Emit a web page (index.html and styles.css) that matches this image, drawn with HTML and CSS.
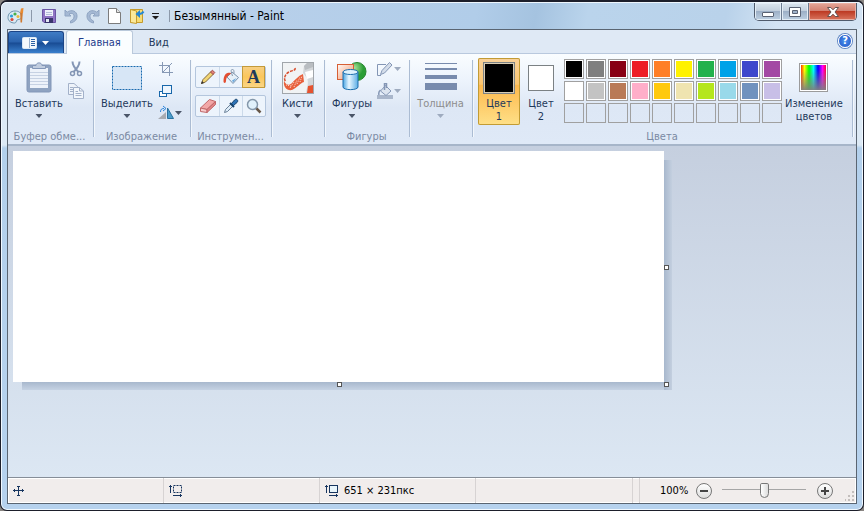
FILE: index.html
```html
<!DOCTYPE html>
<html lang="ru">
  <head>
    <meta charset="UTF-8" />
    <meta name="viewport" content="width=device-width, initial-scale=1.0" />
    <title>Безымянный - Paint</title>
    <!-- Stylesheet -->
    <link rel="stylesheet" href="styles.css">
  </head>
  <body>
    <div class="window">
      <header class="titlebar">
        <div class="quick-access">
          <svg class="app-icon" width="18" height="18" viewBox="0 0 18 18">
            <path d="M8 4C3.500 4 1 7 1 10.500C1 14 4 16 7.500 16C9.500 16 9 14 10 13C11.500 12 14.500 13 14.500 9.500C14.500 6 12 4 8 4Z" fill="#dbeaf4" stroke="#6b93ad"/>
            <circle cx="4.500" cy="9" r="1.600" fill="#2e9fd8"/>
            <circle cx="8" cy="7" r="1.600" fill="#48b04a"/>
            <circle cx="5" cy="12.500" r="1.600" fill="#d9493a"/>
            <circle cx="11" cy="9.500" r="1.500" fill="#e9b93b"/>
            <path d="M14 1.500L16.500 1L16 6H13Z" fill="#e88b32"/>
            <path d="M13.200 6H15.800L15 15.500H13.500Z" fill="#cf7a30"/>
          </svg>
          <span class="divider"></span>
          <button class="tool save" aria-label="Сохранить">
            <svg width="16" height="16" viewBox="0 0 16 16">
              <path d="M1.500 1.500H14.500V14.500H3L1.500 13Z" fill="#8f74c4" stroke="#6a54a4"/>
              <rect x="4" y="2" width="8" height="6" fill="#eef1fb"/>
              <path d="M5 4.500H11M5 6.500H11" stroke="#b4bbd8"/>
              <rect x="4" y="10" width="8" height="5" fill="#39356c"/>
              <rect x="5" y="11" width="3" height="3" fill="#e3e6f4"/>
            </svg>
          </button>
          <button class="tool" aria-label="Отменить">
            <svg width="16" height="16" viewBox="0 0 16 16">
              <path d="M2 2V8H8L6 6C9 4.500 11.500 6 11 9C10.700 11 9.500 12 7.500 13V15C11.500 14 14 12 14 8C14 3 8.500 1 4.200 4.200Z" fill="#a5b9d4" stroke="#8fa4c2"/>
            </svg>
          </button>
          <button class="tool" aria-label="Вернуть">
            <svg width="16" height="16" viewBox="0 0 16 16">
              <path d="M14 2V8H8L10 6C7 4.500 4.500 6 5 9C5.300 11 6.500 12 8.500 13V15C4.500 14 2 12 2 8C2 3 7.500 1 11.800 4.200Z" fill="#a5b9d4" stroke="#8fa4c2"/>
            </svg>
          </button>
          <button class="tool" aria-label="Создать">
            <svg width="16" height="16" viewBox="0 0 16 16">
              <path d="M1.500 0.500H9.500L13.500 4.500V15.500H1.500Z" fill="#fff" stroke="#7c7c7c"/>
              <path d="M9.500 0.500V4.500H13.500" fill="#e4e4e4" stroke="#7c7c7c"/>
            </svg>
          </button>
          <button class="tool" aria-label="Открыть">
            <svg width="16" height="16" viewBox="0 0 16 16">
              <path d="M1.500 1.500H13.500V14.500H1.500Z" fill="#f7dc72" stroke="#c49b2e"/>
              <path d="M1.500 1.500L7.500 3V15.500L1.500 14.500Z" fill="#fbe999" stroke="#c49b2e"/>
              <path d="M14.500 3.500C13.500 5.500 12 6 10 6" fill="none" stroke="#2487d3" stroke-width="2"/>
              <path d="M11 2L6.500 6L11 10Z" fill="#2487d3"/>
            </svg>
          </button>
          <button class="tool more" aria-label="Настройка панели быстрого доступа">
            <svg width="9" height="8" viewBox="0 0 9 8">
              <path d="M1 1H8V2H1ZM1 4H8L4.500 7.500Z" fill="#1c1c1c"/>
            </svg>
          </button>
          <span class="divider last"></span>
        </div>
        <h1 class="title">Безымянный - Paint</h1>
        <div class="window-buttons">
          <button class="minimize" aria-label="Свернуть">
            <svg width="14" height="12" viewBox="0 0 14 12"><rect x="1.500" y="6.500" width="11" height="4" rx="0.500" fill="#fff" stroke="#5a6273"/></svg>
          </button>
          <button class="maximize" aria-label="Развернуть">
            <svg width="14" height="12" viewBox="0 0 14 12"><path d="M1.500 1.500H12.500V10.500H1.500ZM4.500 4.500V7.500H9.500V4.500Z" fill="#fff" fill-rule="evenodd" stroke="#5a6273"/></svg>
          </button>
          <button class="close" aria-label="Закрыть">
            <svg width="14" height="12" viewBox="0 0 14 12"><path d="M1.500 1.500H4.800L7 3.800L9.200 1.500H12.500L9 6L12.500 10.500H9.200L7 8.200L4.800 10.500H1.500L5 6Z" fill="#fff" stroke="#66504f"/></svg>
          </button>
        </div>
      </header>

      <div class="client">
        <nav class="tabs">
          <button class="app-menu" aria-label="Меню Paint">
            <svg width="28" height="14" viewBox="0 0 28 14">
              <rect x="0.500" y="1.500" width="14" height="11" rx="1" fill="#f5f9fd" stroke="#dbe8f5"/>
              <path d="M7.500 2V12" stroke="#9bb2ce"/>
              <path d="M9 3.500H13M9 5.500H13M9 7.500H13M9 9.500H13" stroke="#2d62a5"/>
              <path d="M20 5H27L23.500 9Z" fill="#fff"/>
            </svg>
          </button>
          <button class="tab active">Главная</button>
          <button class="tab">Вид</button>
          <button class="help" aria-label="Справка">?</button>
        </nav>

        <main class="ribbon">
          <section class="group clipboard">
            <div class="group-body">
              <button class="big">
                <span class="icon">
                  <svg width="26" height="32" viewBox="0 0 26 32">
                    <rect x="1" y="3" width="24" height="27" rx="2" fill="#8fa3c1" stroke="#8397b8"/>
                    <rect x="4" y="6" width="18" height="20" fill="#edf2fa"/>
                    <path d="M4 10.500H22M4 13.500H22M4 16.500H22M4 19.500H22M4 22.500H22" stroke="#c6d1e3"/>
                    <path d="M6.500 6.500V3.500H10C10 0 16 0 16 3.500H19.500V6.500Z" fill="#c1cddf" stroke="#8397b8"/>
                  </svg>
                </span>
                <span>Вставить</span>
                <span class="arrow"></span>
              </button>
              <div class="small-tools">
                <button class="tool" aria-label="Вырезать">
                  <svg width="16" height="16" viewBox="0 0 16 16">
                    <path d="M4.500 0.500C4.500 4 6.500 7 10.500 11M11.500 0.500C11.500 4 9.500 7 5.500 11" fill="none" stroke="#8496b5" stroke-width="2"/>
                    <circle cx="4.500" cy="12.500" r="2" fill="none" stroke="#8496b5" stroke-width="1.500"/>
                    <circle cx="11.500" cy="12.500" r="2" fill="none" stroke="#8496b5" stroke-width="1.500"/>
                  </svg>
                </button>
                <button class="tool" aria-label="Копировать">
                  <svg width="16" height="16" viewBox="0 0 16 16">
                    <path d="M0.500 0.500H6L9.500 3.500V11.500H0.500Z" fill="#eef3fa" stroke="#a3b1c9"/>
                    <path d="M2 4.500H5M2 6.500H5M2 8.500H5" stroke="#a3b1c9"/>
                    <path d="M5.500 4.500H11.500L15.500 8V15.500H5.500Z" fill="#f3f7fc" stroke="#a3b1c9"/>
                    <path d="M11.500 4.500V8H15.500M7.500 8.500H10M7.500 10.500H13.500M7.500 12.500H13.500" fill="none" stroke="#a3b1c9"/>
                  </svg>
                </button>
              </div>
            </div>
            <h2>Буфер обме...</h2>
          </section>

          <section class="group image">
            <div class="group-body">
              <button class="big">
                <span class="icon">
                  <svg width="32" height="26" viewBox="0 0 32 26">
                    <rect x="1.500" y="1.500" width="29" height="23" fill="#d7e6f6" stroke="#1769ae" stroke-dasharray="2 1"/>
                  </svg>
                </span>
                <span>Выделить</span>
                <span class="arrow"></span>
              </button>
              <div class="small-tools">
                <button class="tool" aria-label="Обрезать">
                  <svg width="16" height="16" viewBox="0 0 16 16">
                    <path d="M4.500 1V11.500H15M1 4.500H11.500V15M4 12L14 2" fill="none" stroke="#8799b5"/>
                  </svg>
                </button>
                <button class="tool" aria-label="Изменить размер">
                  <svg width="16" height="16" viewBox="0 0 16 16">
                    <rect x="1.500" y="8.500" width="7" height="5" fill="#fff" stroke="#1867aa"/>
                    <rect x="4.500" y="2.500" width="9" height="8" fill="#edf5fd" stroke="#1867aa"/>
                  </svg>
                </button>
                <button class="tool wide" aria-label="Повернуть">
                  <svg width="16" height="16" viewBox="0 0 16 16">
                    <path d="M0 14L8 7V14Z" fill="#a8abb1"/>
                    <path d="M9.500 3L15.500 13.500H9.500Z" fill="#4b9ccb" stroke="#27709f"/>
                    <path d="M2.500 7C2.500 4 4 3.500 6 3.500M5 1L8 3.500L5 6" fill="none" stroke="#2a84dc"/>
                  </svg>
                  <span class="arrow"></span>
                </button>
              </div>
            </div>
            <h2>Изображение</h2>
          </section>

          <section class="group tools">
            <div class="group-body">
              <div class="tool-grid">
                <div class="tool-row">
                  <button aria-label="Карандаш">
                    <svg width="16" height="16" viewBox="0 0 16 16">
                      <path d="M1.500 14.500L3 10.500L11 2.500L13.500 5L5.500 13Z" fill="#f2d674" stroke="#84683a"/>
                      <path d="M10.500 3L12.500 1.200L14.800 3.500L13 5.500Z" fill="#e2837a" stroke="#a24f49"/>
                      <path d="M1 15L2 12L4 14Z" fill="#333"/>
                    </svg>
                  </button>
                  <button aria-label="Заливка цветом">
                    <svg width="16" height="16" viewBox="0 0 16 16">
                      <path d="M4 8L9 3L15.500 8.500L10 14.500Z" fill="#e6f0f8" stroke="#7b93ac"/>
                      <path d="M9.500 7C7.500 1 8 0.500 9.500 0.500C11 0.500 11 2 11 4.500" fill="none" stroke="#8799ad"/>
                      <path d="M8 4C4 3 0.500 5 0.500 12.500C0.500 14.500 3 14.500 3 12C3 9 4 7 7 5.500Z" fill="#e34d30"/>
                      <path d="M9 11.500L13.500 9L10.200 13.500Z" fill="#6ba9de"/>
                    </svg>
                  </button>
                  <button class="selected text-tool" aria-label="Текст">A</button>
                </div>
                <div class="tool-row">
                  <button aria-label="Ластик">
                    <svg width="16" height="16" viewBox="0 0 16 16">
                      <path d="M0.500 10L9.500 1.500L15.500 3.500L7 11.500Z" fill="#f2a7a7" stroke="#c0686a"/>
                      <path d="M0.500 10L7 11.500V14.500L0.500 13.500Z" fill="#f8cccc" stroke="#c0686a"/>
                      <path d="M7 11.500L15.500 3.500V6.500L7 14.500Z" fill="#e28486" stroke="#c0686a"/>
                    </svg>
                  </button>
                  <button aria-label="Палитра">
                    <svg width="16" height="16" viewBox="0 0 16 16">
                      <path d="M1.500 14.500L2.500 11.500L8 6L10 8L4.500 13.500Z" fill="#ddecf8" stroke="#6b8198"/>
                      <path d="M7 5L11 9" stroke="#17446f" stroke-width="2"/>
                      <path d="M8.500 5.500L11.500 2C13.500 0 16 2.500 14 4.500L10.500 7.500Z" fill="#2e73b7" stroke="#17446f"/>
                    </svg>
                  </button>
                  <button aria-label="Масштаб">
                    <svg width="16" height="16" viewBox="0 0 16 16">
                      <path d="M9.500 9.500L14.500 14.500" stroke="#675748" stroke-width="2.500"/>
                      <circle cx="6.500" cy="6.500" r="5" fill="#e1f1fb" stroke="#8497aa" stroke-width="1.500"/>
                    </svg>
                  </button>
                </div>
              </div>
            </div>
            <h2>Инструмен...</h2>
          </section>

          <section class="group brushes">
            <div class="group-body">
              <button class="big">
                <span class="icon">
                  <svg width="32" height="32" viewBox="0 0 32 32">
                    <rect x="0.500" y="0.500" width="31" height="31" fill="#f1f3f4" stroke="#a1a6ab"/>
                    <path d="M13 6C14 9 10 8 7 10C3 12 1 17 4 20" fill="none" stroke="#d94e2d" stroke-width="1.500" stroke-dasharray="3 1"/>
                    <path d="M2 19C4 23 7 24 10 21C13 18 16 14 21 12L22 20C18 21 15 26 10 28C5 29 1 25 2 19Z" fill="#e8603c"/>
                    <path d="M4 23L9 24M8 26L12 20M12 25L15 18M15 22L18 15M18 20L20 14" stroke="#fbe1d8" stroke-dasharray="1 1"/>
                    <path d="M22 4L25 1H31V31H24C25 25 27 21 25 16L21 11Z" fill="#d3d6d9"/>
                    <path d="M22 4L25 1H31V5L23 8Z" fill="#b9bdc1"/>
                    <path d="M23 10L31 8V15L25 17Z" fill="#fff"/>
                    <path d="M26 24L31 23V31H25Z" fill="#e6522f"/>
                  </svg>
                </span>
                <span>Кисти</span>
                <span class="arrow"></span>
              </button>
            </div>
          </section>

          <section class="group shapes">
            <div class="group-body">
              <button class="big">
                <span class="icon">
                  <svg width="32" height="32" viewBox="0 0 32 32">
                    <defs>
                      <linearGradient id="cylinder"><stop stop-color="#4aa5e2"/><stop offset="0.400" stop-color="#e9f7ff"/><stop offset="1" stop-color="#5bade5"/></linearGradient>
                      <linearGradient id="square" x2="1" y2="1"><stop stop-color="#fffaf7"/><stop offset="1" stop-color="#f19369"/></linearGradient>
                      <radialGradient id="ball" cx="0.350" cy="0.300"><stop stop-color="#a8e29a"/><stop offset="1" stop-color="#2a9e36"/></radialGradient>
                    </defs>
                    <circle cx="21" cy="9.500" r="9" fill="url(#ball)" stroke="#25852c"/>
                    <rect x="1.500" y="2.500" width="16" height="15" fill="url(#square)" stroke="#d75f35"/>
                    <path d="M7 10V25C7 28.500 22 28.500 22 25V10Z" fill="url(#cylinder)" stroke="#1e6fae"/>
                    <ellipse cx="14.500" cy="10" rx="7.500" ry="2.500" fill="#dff2fd" stroke="#1e6fae"/>
                  </svg>
                </span>
                <span>Фигуры</span>
                <span class="arrow"></span>
              </button>
              <div class="small-tools">
                <button class="tool wide" aria-label="Контур">
                  <svg width="16" height="16" viewBox="0 0 16 16">
                    <path d="M9 3.500H0.500V14.500H4" fill="none" stroke="#8496b5"/>
                    <path d="M3.500 13.500L5 9.500L12.500 1.500L15 4L7.500 12Z" fill="#d4ddea" stroke="#8496b5"/>
                  </svg>
                  <span class="arrow"></span>
                </button>
                <button class="tool wide" aria-label="Заливка">
                  <svg width="16" height="16" viewBox="0 0 16 16">
                    <rect x="0" y="12" width="16" height="4" fill="#a9b6cb"/>
                    <path d="M3.500 8L8.500 2.500L14 8L9 12.500Z" fill="#dce4ef" stroke="#8496b5"/>
                    <path d="M7.500 7V0.500H9.500V5M3.500 7C2 8 1.500 10 2 12" fill="none" stroke="#8496b5" stroke-width="1.500"/>
                  </svg>
                  <span class="arrow"></span>
                </button>
              </div>
            </div>
            <h2>Фигуры</h2>
          </section>

          <section class="group thickness">
            <div class="group-body">
              <button class="big" disabled>
                <span class="icon">
                  <svg width="32" height="32" viewBox="0 0 32 32">
                    <path d="M0 1H32V2H0ZM0 6H32V8H0ZM0 13H32V17H0ZM0 21H32V28H0Z" fill="#788bad"/>
                  </svg>
                </span>
                <span>Толщина</span>
                <span class="arrow"></span>
              </button>
            </div>
          </section>

          <section class="group colors">
            <div class="group-body">
              <button class="big color-one selected">
                <span class="icon"><span class="swatch"></span></span>
                <span>Цвет</span>
                <span>1</span>
              </button>
              <button class="big color-two">
                <span class="icon"><span class="swatch"></span></span>
                <span>Цвет</span>
                <span>2</span>
              </button>
              <div class="palette" id="palette"></div>
              <button class="big edit-colors">
                <span class="icon"><span class="rainbow"></span></span>
                <span>Изменение</span>
                <span>цветов</span>
              </button>
            </div>
            <h2>Цвета</h2>
          </section>
        </main>

        <div class="workspace">
          <div class="sheet">
            <canvas class="paper" width="651" height="231"></canvas>
            <span class="handle right"></span>
            <span class="handle bottom"></span>
            <span class="handle corner"></span>
          </div>
        </div>

        <footer class="statusbar">
          <div class="cell">
            <svg width="12" height="12" viewBox="0 0 12 12">
              <path d="M5.500 1V11M0 5.500H11M4 1.500H7M4 10.500H7M1.500 4V7M9.500 4V7" stroke="#17355f"/>
            </svg>
          </div>
          <div class="cell">
            <svg width="14" height="13" viewBox="0 0 14 13">
              <path d="M1.500 1V9M0 2.500H3M4 11.500H13M11.500 10V13" stroke="#17355f"/>
              <rect x="4.500" y="1.500" width="8" height="7" fill="none" stroke="#17355f" stroke-dasharray="2 1"/>
            </svg>
          </div>
          <div class="cell">
            <svg width="14" height="13" viewBox="0 0 14 13">
              <path d="M1.500 1V9M0 2.500H3M4 11.500H13M11.500 10V13" stroke="#17355f"/>
              <rect x="4.500" y="1.500" width="8" height="7" fill="#e8f5fb" stroke="#17355f"/>
            </svg>
            <span>651 × 231пкс</span>
          </div>
          <div class="cell"></div>
          <div class="cell gap"></div>
          <div class="zoom">
            <label for="zoom">100%</label>
            <button class="round" id="zoom-out" aria-label="Уменьшить">
              <svg width="10" height="10" viewBox="0 0 10 10"><path d="M1 5H9" stroke="#444" stroke-width="2"/></svg>
            </button>
            <input type="range" id="zoom" min="0" max="100" value="50" />
            <button class="round" id="zoom-in" aria-label="Увеличить">
              <svg width="10" height="10" viewBox="0 0 10 10"><path d="M1 5H9M5 1V9" stroke="#444" stroke-width="2"/></svg>
            </button>
          </div>
          <svg class="grip" width="10" height="10" viewBox="0 0 10 10">
            <path d="M7 0H9V2H7ZM7 4H9V6H7ZM7 8H9V10H7ZM3 4H5V6H3ZM3 8H5V10H3ZM0 8H1V10H0Z" fill="#c3bebc"/>
          </svg>
        </footer>
      </div>
    </div>
    <!-- Script -->
    <script>
      const palette = document.getElementById("palette");
      const zoom = document.getElementById("zoom");
      const zoomOut = document.getElementById("zoom-out");
      const zoomIn = document.getElementById("zoom-in");

      const colors = [
        "#000000", "#7f7f7f", "#880015", "#ed1c24", "#ff7f27",
        "#fff200", "#22b14c", "#00a2e8", "#3f48cc", "#a349a4",
        "#ffffff", "#c3c3c3", "#b97a57", "#ffaec9", "#ffc90e",
        "#efe4b0", "#b5e61d", "#99d9ea", "#7092be", "#c8bfe7",
      ];

      // two rows of colors, the third one stays empty
      for (let i = 0; i < 30; i++) {
        const cell = document.createElement("button");
        cell.className = "color";
        if (colors[i]) {
          cell.classList.add("filled");
          cell.style.backgroundColor = colors[i];
          cell.setAttribute("aria-label", colors[i]);
        } else {
          cell.setAttribute("aria-label", "Пусто");
        }
        palette.appendChild(cell);
      }

      zoomOut.addEventListener("click", () => zoom.stepDown(10));
      zoomIn.addEventListener("click", () => zoom.stepUp(10));
    </script>
  </body>
</html>
```

FILE: styles.css
```css
* {
  padding: 0;
  margin: 0;
  box-sizing: border-box;
}
body {
  background-color: #8a8683;
  font-family: "DejaVu Sans Condensed", "Noto Sans", sans-serif;
  font-size: 11px;
  line-height: 13px;
  color: #1e395b;
}
button {
  font: inherit;
  color: inherit;
  background: none;
  border: none;
  cursor: pointer;
}
svg {
  display: block;
}
.window {
  min-height: 100vh;
  display: flex;
  flex-direction: column;
  padding: 0 6px 6px;
  border: 1px solid #1d1f2b;
  border-top-width: 2px;
  border-radius: 7px;
  background: linear-gradient(#dce9f5 0, #dce9f5 143px, #b3d0ec 146px, #b6d2ee 100%);
  box-shadow: inset 0 0 0 1px #f0f8ff;
}

/* Title bar */
.titlebar {
  display: flex;
  align-items: center;
  height: 27px;
  margin: 0 -5px;
  padding-left: 5px;
  background: linear-gradient(100deg, #d9e5f1 0%, #d3e2f1 18%, #b8d0ea 28%, #b1cde9 55%, #a5c3e0 62%, #bad4ec 68%, #b9d2ea 84%, #d3e3f3 90%);
  border-top: 1px solid #eef6fd;
  border-radius: 5px 5px 0 0;
}
.quick-access {
  display: flex;
  align-items: center;
  gap: 6px;
}
.divider {
  width: 1px;
  height: 12px;
  margin-right: 3px;
  background-color: #8c99aa;
}
.divider.last {
  margin: 0 4px 0 3px;
}
.tool {
  display: flex;
  align-items: center;
}
.title {
  font-size: 12px;
  font-weight: 400;
  color: #000;
}
.window-buttons {
  display: flex;
  align-self: flex-start;
  height: 18px;
  margin: 0 5px 0 auto;
  border: 1px solid #505b6c;
  border-top: none;
  border-radius: 0 0 5px 5px;
  overflow: hidden;
}
.window-buttons button {
  display: flex;
  align-items: center;
  justify-content: center;
  width: 27px;
  border-right: 1px solid #6c7b90;
  background: linear-gradient(#dbe5ef, #c2cfdd 45%, #9db0c7 50%, #bed0e2);
  box-shadow: inset 0 0 0 1px #e3edf6;
}
.window-buttons .close {
  width: 47px;
  border-right: none;
  background: linear-gradient(#e5a698, #d38172 45%, #bd3b24 50%, #d9755e);
  box-shadow: inset 0 0 0 1px #e9b0a4;
}

/* Client area */
.client {
  flex: 1;
  display: flex;
  flex-direction: column;
  border: 1px solid #5a6572;
}
.tabs {
  display: flex;
  align-items: flex-end;
  height: 24px;
  background-color: #dfe9f5;
  border-bottom: 1px solid #b9c9de;
}
.app-menu {
  display: flex;
  align-items: center;
  justify-content: center;
  width: 56px;
  height: 22px;
  border: 1px solid #1c4587;
  border-bottom: none;
  border-radius: 3px 3px 0 0;
  background: linear-gradient(#3f7cc5, #2a62ad 48%, #184b93 52%, #3a80cd);
}
.tab {
  height: 21px;
  padding: 0 16px;
}
.tab.active {
  margin: 0 0 -1px 2px;
  height: 24px;
  padding: 0 11px;
  border: 1px solid #bac9db;
  border-bottom: none;
  border-radius: 3px 3px 0 0;
  background-color: #fafdff;
  color: #1e3c8c;
}
.help {
  width: 14px;
  height: 14px;
  margin: 0 4px 5px auto;
  border: 1px solid #fff;
  border-radius: 50%;
  background: radial-gradient(#4c93ee, #1d4fc4);
  box-shadow: 0 0 0 1px #6288c4;
  color: #fff;
  font-weight: 700;
  line-height: 12px;
}

/* Ribbon */
.ribbon {
  display: flex;
  height: 92px;
  padding-top: 4px;
  background: linear-gradient(#fafdff, #ecf3fc 30%, #dde7f5 60%, #dfe9f7);
  border-bottom: 2px solid #a6b5c9;
}
.group {
  flex: none;
  display: flex;
  flex-direction: column;
  justify-content: space-between;
  position: relative;
  padding-right: 4px;
}
/* etched line on the right of each group */
.group::after {
  content: "";
  position: absolute;
  top: 2px;
  right: 0;
  bottom: 7px;
  width: 2px;
  background: linear-gradient(90deg, #abbcd3 50%, #f2f7fc 50%);
}
.group h2 {
  font-size: 11px;
  font-weight: 400;
  line-height: 15px;
  text-align: center;
  color: #7b8aa3;
  white-space: nowrap;
}
.group-body {
  display: flex;
  justify-content: center;
}
.clipboard {
  width: 87px;
}
.image {
  width: 97px;
}
.tools {
  width: 81px;
}
.brushes {
  width: 53px;
}
.shapes {
  width: 85px;
}
.thickness {
  width: 63px;
}
.colors {
  width: 380px;
}
.colors .group-body {
  justify-content: flex-start;
  padding-left: 4px;
}
.big {
  display: flex;
  flex-direction: column;
  align-items: center;
  height: 67px;
  white-space: nowrap;
}
.big:disabled {
  color: #8d8d8d;
}
.big .icon {
  display: flex;
  align-items: center;
  justify-content: center;
  height: 39px;
}
.arrow {
  width: 7px;
  height: 4px;
  background-color: #4a5568;
  clip-path: polygon(0 0, 100% 0, 50% 100%);
}
.big .arrow {
  margin-top: 4px;
}
.big:disabled .arrow,
.shapes .small-tools .arrow {
  background-color: #9eabbf;
}
.small-tools {
  display: flex;
  flex-direction: column;
  gap: 6px;
  padding: 3px 0 0 5px;
}
.wide {
  gap: 1px;
}
.tool-grid {
  display: flex;
  flex-direction: column;
  gap: 7px;
  padding-top: 8px;
}
.tool-row {
  display: flex;
  height: 22px;
  border: 1px solid #b4c6dd;
  border-radius: 2px;
  background-color: #edf4fc;
}
.tool-row button {
  display: flex;
  align-items: center;
  justify-content: center;
  width: 23px;
}
.tool-row button + button {
  border-left: 1px solid #ccdaea;
}
.tool-row .selected {
  margin: -1px -1px -1px 0;
  border: 1px solid #c39a3a;
  background: linear-gradient(#f7cf82, #fbc65b 50%, #fbd584);
}
.text-tool {
  font-family: "Liberation Serif", serif;
  font-size: 18px;
  font-weight: 700;
}

/* Colors */
.color-one {
  width: 42px;
  border-radius: 2px;
  background: linear-gradient(#f8d19b, #fbc670 39%, #fdb94e 41%, #fee088);
  box-shadow: inset 0 0 0 1px #c29b34;
}
.color-two {
  width: 42px;
}
.swatch {
  width: 26px;
  height: 26px;
  border: 1px solid #7b8184;
  outline: 1px solid #fff;
  outline-offset: -2px;
  background-color: #fff;
}
.color-one .swatch {
  width: 32px;
  height: 32px;
  outline-color: #d9cdb4;
  background-color: #000;
}
.palette {
  display: grid;
  grid-template-columns: repeat(10, 20px);
  grid-auto-rows: 20px;
  gap: 2px;
  padding: 1px 0 0 2px;
}
.color {
  border: 1px solid #a0a0a0;
}
.color.filled {
  box-shadow: inset 0 0 0 1px #fff;
}
.edit-colors {
  margin-left: 3px;
}
.rainbow {
  width: 29px;
  height: 29px;
  border: 1px solid #9b9b9b;
  outline: 1px solid #fff;
  outline-offset: -2px;
  background: linear-gradient(transparent 20%, #808080), linear-gradient(90deg, #f00, #ff0, #0f0, #0ff, #00f, #f0f, #f00);
}

/* Drawing area */
.workspace {
  flex: 1;
  padding: 5px;
  background: linear-gradient(#c5cfdf, #dce7f3);
}
.sheet {
  position: relative;
  width: fit-content;
}
/* soft strips under and beside the paper */
.sheet::before,
.sheet::after {
  content: "";
  position: absolute;
}
.sheet::before {
  top: 9px;
  bottom: -8px;
  left: 100%;
  width: 8px;
  background: linear-gradient(90deg, #a8b8cd, #c3cfdf);
}
.sheet::after {
  top: 100%;
  left: 9px;
  right: 0;
  height: 8px;
  background: linear-gradient(#a8b8cd, #c5d2e3);
}
.paper {
  display: block;
  background-color: #fff;
}
.handle {
  position: absolute;
  z-index: 1;
  width: 5px;
  height: 5px;
  border: 1px solid #555;
  background-color: #fff;
}
.handle.right {
  top: 50%;
  left: 100%;
  margin-top: -2px;
}
.handle.bottom {
  top: 100%;
  left: 50%;
  margin-left: -2px;
}
.handle.corner {
  top: 100%;
  left: 100%;
}

/* Status bar */
.statusbar {
  display: flex;
  align-items: stretch;
  height: 26px;
  border-top: 1px solid #868e98;
  box-shadow: inset 0 0 0 1px #fff;
  background-color: #f1edec;
  color: #000;
}
.cell {
  display: flex;
  align-items: center;
  gap: 5px;
  width: 156px;
  padding-left: 5px;
  border-right: 1px solid #d7d3d3;
}
.cell.gap {
  width: 7px;
}
.statusbar .cell:nth-child(4) {
  flex: 1;
}
.zoom {
  display: flex;
  align-items: center;
  padding-left: 20px;
}
.zoom label {
  width: 36px;
}
.round {
  display: flex;
  align-items: center;
  justify-content: center;
  width: 16px;
  height: 16px;
  border: 1px solid #777;
  border-radius: 50%;
  background: linear-gradient(#fff, #ddd);
}
.zoom input {
  appearance: none;
  width: 84px;
  height: 16px;
  margin: 0 11px 0 10px;
  background: linear-gradient(#a6a6a6, #a6a6a6) center 6px / 100% 1px no-repeat;
}
.zoom input::-webkit-slider-thumb {
  appearance: none;
  width: 9px;
  height: 15px;
  border: 1px solid #777;
  border-radius: 2px 2px 5px 5px;
  background: linear-gradient(90deg, #fff, #ddd);
}
.grip {
  align-self: flex-end;
  margin: 0 1px 2px 12px;
}
```
